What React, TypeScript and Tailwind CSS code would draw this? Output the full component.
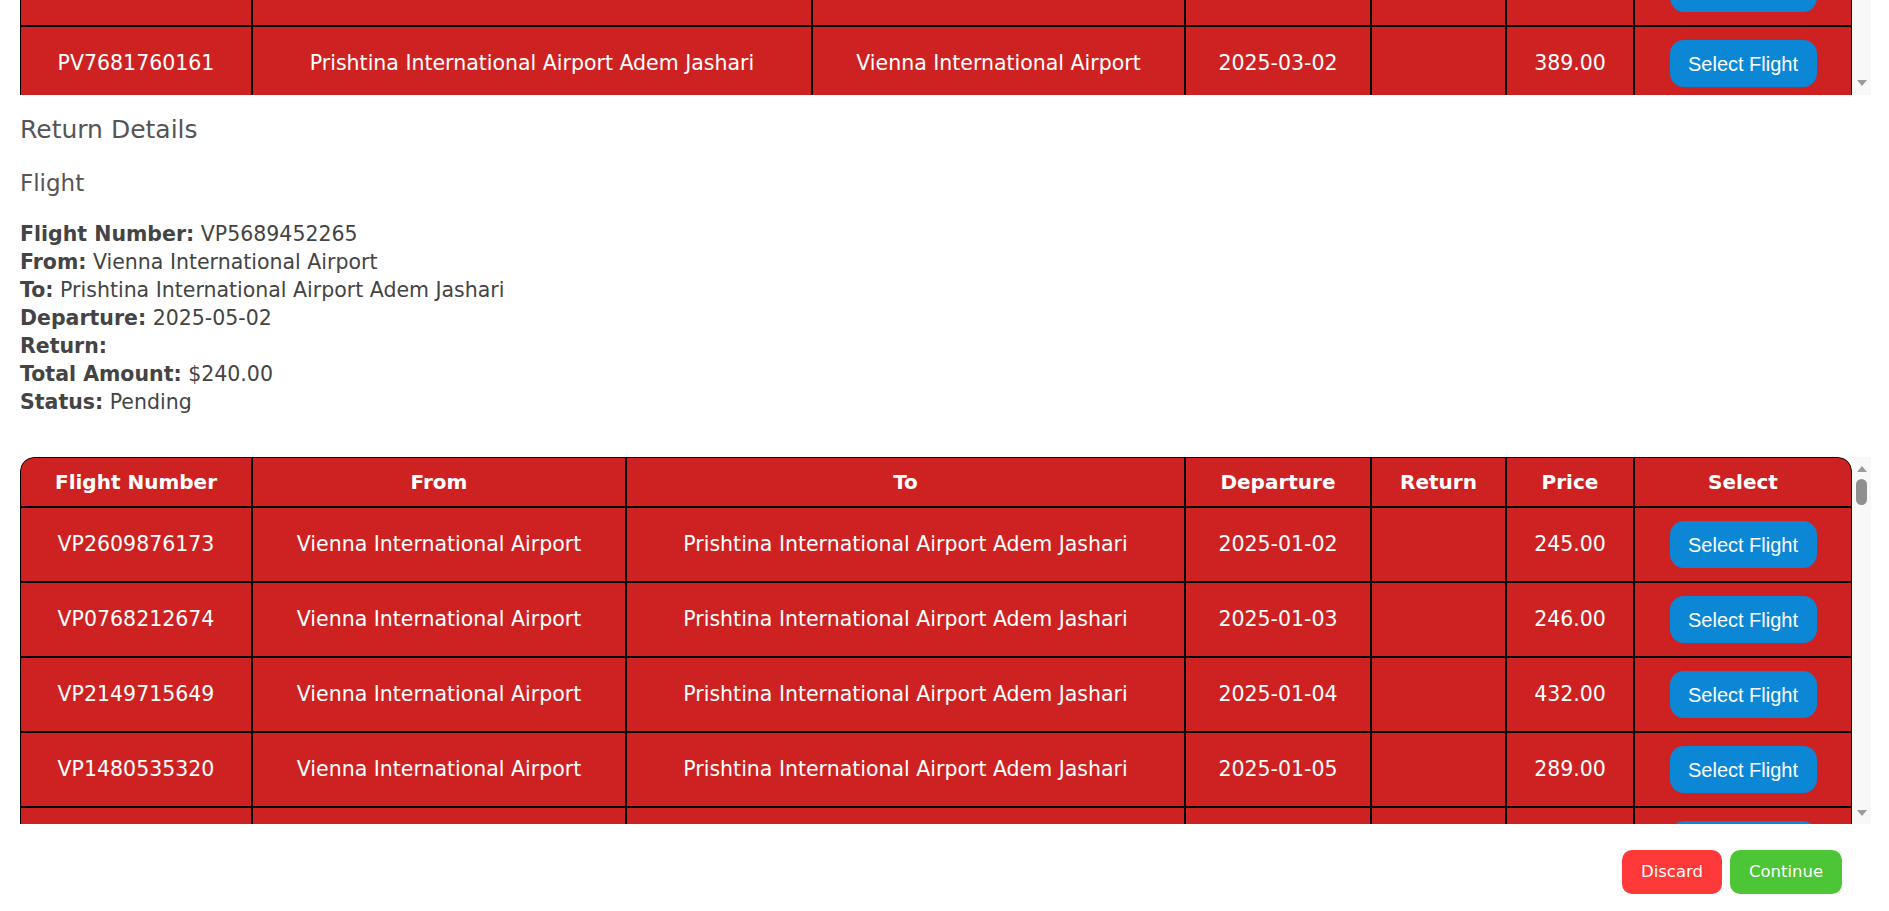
import React from "react";

type Flight = {
  number: string;
  from: string;
  to: string;
  departure: string;
  returnDate: string;
  price: string;
};

const PRN = "Prishtina International Airport Adem Jashari";
const VIE = "Vienna International Airport";

const outbound: Flight[] = [
  { number: "PV7681759947", from: PRN, to: VIE, departure: "2025-03-01", returnDate: "", price: "412.00" },
  { number: "PV7681760161", from: PRN, to: VIE, departure: "2025-03-02", returnDate: "", price: "389.00" },
];

const returns: Flight[] = [
  { number: "VP2609876173", from: VIE, to: PRN, departure: "2025-01-02", returnDate: "", price: "245.00" },
  { number: "VP0768212674", from: VIE, to: PRN, departure: "2025-01-03", returnDate: "", price: "246.00" },
  { number: "VP2149715649", from: VIE, to: PRN, departure: "2025-01-04", returnDate: "", price: "432.00" },
  { number: "VP1480535320", from: VIE, to: PRN, departure: "2025-01-05", returnDate: "", price: "289.00" },
  { number: "VP3317290458", from: VIE, to: PRN, departure: "2025-01-06", returnDate: "", price: "318.00" },
];

const cell = "bg-[#ce2222] border border-black text-center align-middle p-0";

const FlightRows: React.FC<{ rows: Flight[] }> = ({ rows }) => (
  <tbody className="text-[20.5px]">
    {rows.map((f) => (
      <tr key={f.number} className="h-[75px]">
        <td className={cell}>{f.number}</td>
        <td className={cell}>{f.from}</td>
        <td className={cell}>{f.to}</td>
        <td className={cell}>{f.departure}</td>
        <td className={cell}>{f.returnDate}</td>
        <td className={cell}>{f.price}</td>
        <td className={cell}>
          <button className="w-[147px] h-[47px] rounded-[14px] bg-[#0c87d6] text-white text-[20px] font-['Liberation_Sans',Arial,sans-serif]">
            Select Flight
          </button>
        </td>
      </tr>
    ))}
  </tbody>
);

const Arrow: React.FC<{ up?: boolean }> = ({ up }) => (
  <svg width="10" height="6" viewBox="0 0 10 6" className="shrink-0">
    {up ? <path d="M5 0 L10 6 L0 6 Z" fill="#9a9a9a" /> : <path d="M0 0 L10 0 L5 6 Z" fill="#9a9a9a" />}
  </svg>
);

const DetailLine: React.FC<{ label: string; value: string }> = ({ label, value }) => (
  <div>
    <span className="font-bold">{label}:</span> {value}
  </div>
);

export default function App() {
  return (
    <div className="h-[911px] overflow-hidden bg-white pl-[20px] pr-[18px] font-['DejaVu_Sans',Verdana,sans-serif] text-[20px]">
      {/* outbound list, scrolled to its bottom */}
      <div className="flex h-[95px]">
        <div className="w-[1832px] h-[95px] overflow-hidden flex flex-col justify-end">
          <table className="w-[1832px] table-fixed border-separate border-spacing-0 text-white mb-[-6px]">
            <colgroup>
              <col className="w-[232px]" />
              <col className="w-[560px]" />
              <col className="w-[373px]" />
              <col className="w-[186px]" />
              <col className="w-[135px]" />
              <col className="w-[128px]" />
              <col className="w-[218px]" />
            </colgroup>
            <FlightRows rows={outbound} />
          </table>
        </div>
        <div className="w-[19px] bg-[#f8f8f8] flex flex-col items-center justify-end pb-[9px]">
          <Arrow />
        </div>
      </div>

      <h2 className="mt-[20px] text-[25px] leading-[30px] text-[#555555]">Return Details</h2>
      <h3 className="mt-[25px] text-[23px] leading-[27px] text-[#555555]">Flight</h3>

      <div className="mt-[23px] text-[20.5px] leading-[28px] text-[#444444]">
        <DetailLine label="Flight Number" value="VP5689452265" />
        <DetailLine label="From" value={VIE} />
        <DetailLine label="To" value={PRN} />
        <DetailLine label="Departure" value="2025-05-02" />
        <DetailLine label="Return" value="" />
        <DetailLine label="Total Amount" value="$240.00" />
        <DetailLine label="Status" value="Pending" />
      </div>

      {/* return list */}
      <div className="flex mt-[41px] h-[367px]">
        <div className="w-[1832px] h-[367px] overflow-hidden rounded-t-[14px]">
          <table className="w-[1832px] table-fixed border-separate border-spacing-0 text-white">
            <colgroup>
              <col className="w-[232px]" />
              <col className="w-[374px]" />
              <col className="w-[559px]" />
              <col className="w-[186px]" />
              <col className="w-[135px]" />
              <col className="w-[128px]" />
              <col className="w-[218px]" />
            </colgroup>
            <thead>
              <tr className="h-[50px] font-bold text-[20px]">
                <th className={cell + " rounded-tl-[14px]"}>Flight Number</th>
                <th className={cell}>From</th>
                <th className={cell}>To</th>
                <th className={cell}>Departure</th>
                <th className={cell}>Return</th>
                <th className={cell}>Price</th>
                <th className={cell + " rounded-tr-[14px]"}>Select</th>
              </tr>
            </thead>
            <FlightRows rows={returns} />
          </table>
        </div>
        <div className="w-[19px] bg-[#f8f8f8] flex flex-col items-center pt-[9px] pb-[8px]">
          <Arrow up />
          <div className="mt-[7px] w-[11px] h-[26px] rounded-full bg-[#8f8f8f]" />
          <div className="flex-1" />
          <Arrow />
        </div>
      </div>

      <div className="mt-[26px] flex justify-end gap-[8px] pr-[29px]">
        <button className="w-[100px] h-[44px] rounded-[10px] bg-[#ff383a] text-white text-[16.5px]">Discard</button>
        <button className="w-[112px] h-[44px] rounded-[10px] bg-[#4cc536] text-white text-[16.5px]">Continue</button>
      </div>
    </div>
  );
}
